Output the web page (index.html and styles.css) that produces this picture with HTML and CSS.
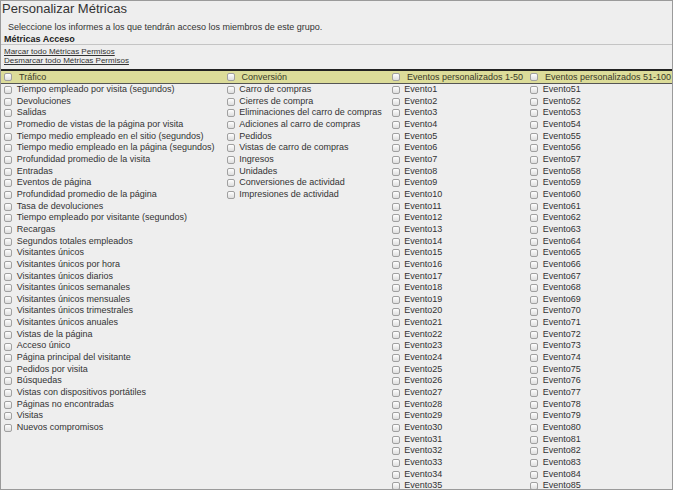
FILE: index.html
```html
<!DOCTYPE html>
<html lang="es">
<head>
<meta charset="utf-8">
<title>Personalizar Métricas</title>
<link rel="stylesheet" href="styles.css">
</head>
<body>
<div class="frame">
  <h1 class="title">Personalizar Métricas</h1>
  <p class="intro">Seleccione los informes a los que tendrán acceso los miembros de este grupo.</p>
  <div class="section-title">Métricas Acceso</div>
  <div class="links">
    <a href="#" class="link">Marcar todo Métricas Permisos</a>
    <a href="#" class="link">Desmarcar todo Métricas Permisos</a>
  </div>
  <div class="head">
    <label class="hcell"><input type="checkbox"><span>Tráfico</span></label>
    <label class="hcell"><input type="checkbox"><span>Conversión</span></label>
    <label class="hcell h3"><input type="checkbox"><span>Eventos personalizados 1-50</span></label>
    <label class="hcell"><input type="checkbox"><span>Eventos personalizados 51-100</span></label>
  </div>
  <div class="cols">
    <div class="col">
      <label class="item"><input type="checkbox"><span>Tiempo empleado por visita (segundos)</span></label>
      <label class="item"><input type="checkbox"><span>Devoluciones</span></label>
      <label class="item"><input type="checkbox"><span>Salidas</span></label>
      <label class="item"><input type="checkbox"><span>Promedio de vistas de la página por visita</span></label>
      <label class="item"><input type="checkbox"><span>Tiempo medio empleado en el sitio (segundos)</span></label>
      <label class="item"><input type="checkbox"><span>Tiempo medio empleado en la página (segundos)</span></label>
      <label class="item"><input type="checkbox"><span>Profundidad promedio de la visita</span></label>
      <label class="item"><input type="checkbox"><span>Entradas</span></label>
      <label class="item"><input type="checkbox"><span>Eventos de página</span></label>
      <label class="item"><input type="checkbox"><span>Profundidad promedio de la página</span></label>
      <label class="item"><input type="checkbox"><span>Tasa de devoluciones</span></label>
      <label class="item"><input type="checkbox"><span>Tiempo empleado por visitante (segundos)</span></label>
      <label class="item"><input type="checkbox"><span>Recargas</span></label>
      <label class="item"><input type="checkbox"><span>Segundos totales empleados</span></label>
      <label class="item"><input type="checkbox"><span>Visitantes únicos</span></label>
      <label class="item"><input type="checkbox"><span>Visitantes únicos por hora</span></label>
      <label class="item"><input type="checkbox"><span>Visitantes únicos diarios</span></label>
      <label class="item"><input type="checkbox"><span>Visitantes únicos semanales</span></label>
      <label class="item"><input type="checkbox"><span>Visitantes únicos mensuales</span></label>
      <label class="item"><input type="checkbox"><span>Visitantes únicos trimestrales</span></label>
      <label class="item"><input type="checkbox"><span>Visitantes únicos anuales</span></label>
      <label class="item"><input type="checkbox"><span>Vistas de la página</span></label>
      <label class="item"><input type="checkbox"><span>Acceso único</span></label>
      <label class="item"><input type="checkbox"><span>Página principal del visitante</span></label>
      <label class="item"><input type="checkbox"><span>Pedidos por visita</span></label>
      <label class="item"><input type="checkbox"><span>Búsquedas</span></label>
      <label class="item"><input type="checkbox"><span>Vistas con dispositivos portátiles</span></label>
      <label class="item"><input type="checkbox"><span>Páginas no encontradas</span></label>
      <label class="item"><input type="checkbox"><span>Visitas</span></label>
      <label class="item"><input type="checkbox"><span>Nuevos compromisos</span></label>
    </div>
    <div class="col">
      <label class="item"><input type="checkbox"><span>Carro de compras</span></label>
      <label class="item"><input type="checkbox"><span>Cierres de compra</span></label>
      <label class="item"><input type="checkbox"><span>Eliminaciones del carro de compras</span></label>
      <label class="item"><input type="checkbox"><span>Adiciones al carro de compras</span></label>
      <label class="item"><input type="checkbox"><span>Pedidos</span></label>
      <label class="item"><input type="checkbox"><span>Vistas de carro de compras</span></label>
      <label class="item"><input type="checkbox"><span>Ingresos</span></label>
      <label class="item"><input type="checkbox"><span>Unidades</span></label>
      <label class="item"><input type="checkbox"><span>Conversiones de actividad</span></label>
      <label class="item"><input type="checkbox"><span>Impresiones de actividad</span></label>
    </div>
    <div class="col">
      <label class="item"><input type="checkbox"><span>Evento1</span></label>
      <label class="item"><input type="checkbox"><span>Evento2</span></label>
      <label class="item"><input type="checkbox"><span>Evento3</span></label>
      <label class="item"><input type="checkbox"><span>Evento4</span></label>
      <label class="item"><input type="checkbox"><span>Evento5</span></label>
      <label class="item"><input type="checkbox"><span>Evento6</span></label>
      <label class="item"><input type="checkbox"><span>Evento7</span></label>
      <label class="item"><input type="checkbox"><span>Evento8</span></label>
      <label class="item"><input type="checkbox"><span>Evento9</span></label>
      <label class="item"><input type="checkbox"><span>Evento10</span></label>
      <label class="item"><input type="checkbox"><span>Evento11</span></label>
      <label class="item"><input type="checkbox"><span>Evento12</span></label>
      <label class="item"><input type="checkbox"><span>Evento13</span></label>
      <label class="item"><input type="checkbox"><span>Evento14</span></label>
      <label class="item"><input type="checkbox"><span>Evento15</span></label>
      <label class="item"><input type="checkbox"><span>Evento16</span></label>
      <label class="item"><input type="checkbox"><span>Evento17</span></label>
      <label class="item"><input type="checkbox"><span>Evento18</span></label>
      <label class="item"><input type="checkbox"><span>Evento19</span></label>
      <label class="item"><input type="checkbox"><span>Evento20</span></label>
      <label class="item"><input type="checkbox"><span>Evento21</span></label>
      <label class="item"><input type="checkbox"><span>Evento22</span></label>
      <label class="item"><input type="checkbox"><span>Evento23</span></label>
      <label class="item"><input type="checkbox"><span>Evento24</span></label>
      <label class="item"><input type="checkbox"><span>Evento25</span></label>
      <label class="item"><input type="checkbox"><span>Evento26</span></label>
      <label class="item"><input type="checkbox"><span>Evento27</span></label>
      <label class="item"><input type="checkbox"><span>Evento28</span></label>
      <label class="item"><input type="checkbox"><span>Evento29</span></label>
      <label class="item"><input type="checkbox"><span>Evento30</span></label>
      <label class="item"><input type="checkbox"><span>Evento31</span></label>
      <label class="item"><input type="checkbox"><span>Evento32</span></label>
      <label class="item"><input type="checkbox"><span>Evento33</span></label>
      <label class="item"><input type="checkbox"><span>Evento34</span></label>
      <label class="item"><input type="checkbox"><span>Evento35</span></label>
    </div>
    <div class="col">
      <label class="item"><input type="checkbox"><span>Evento51</span></label>
      <label class="item"><input type="checkbox"><span>Evento52</span></label>
      <label class="item"><input type="checkbox"><span>Evento53</span></label>
      <label class="item"><input type="checkbox"><span>Evento54</span></label>
      <label class="item"><input type="checkbox"><span>Evento55</span></label>
      <label class="item"><input type="checkbox"><span>Evento56</span></label>
      <label class="item"><input type="checkbox"><span>Evento57</span></label>
      <label class="item"><input type="checkbox"><span>Evento58</span></label>
      <label class="item"><input type="checkbox"><span>Evento59</span></label>
      <label class="item"><input type="checkbox"><span>Evento60</span></label>
      <label class="item"><input type="checkbox"><span>Evento61</span></label>
      <label class="item"><input type="checkbox"><span>Evento62</span></label>
      <label class="item"><input type="checkbox"><span>Evento63</span></label>
      <label class="item"><input type="checkbox"><span>Evento64</span></label>
      <label class="item"><input type="checkbox"><span>Evento65</span></label>
      <label class="item"><input type="checkbox"><span>Evento66</span></label>
      <label class="item"><input type="checkbox"><span>Evento67</span></label>
      <label class="item"><input type="checkbox"><span>Evento68</span></label>
      <label class="item"><input type="checkbox"><span>Evento69</span></label>
      <label class="item"><input type="checkbox"><span>Evento70</span></label>
      <label class="item"><input type="checkbox"><span>Evento71</span></label>
      <label class="item"><input type="checkbox"><span>Evento72</span></label>
      <label class="item"><input type="checkbox"><span>Evento73</span></label>
      <label class="item"><input type="checkbox"><span>Evento74</span></label>
      <label class="item"><input type="checkbox"><span>Evento75</span></label>
      <label class="item"><input type="checkbox"><span>Evento76</span></label>
      <label class="item"><input type="checkbox"><span>Evento77</span></label>
      <label class="item"><input type="checkbox"><span>Evento78</span></label>
      <label class="item"><input type="checkbox"><span>Evento79</span></label>
      <label class="item"><input type="checkbox"><span>Evento80</span></label>
      <label class="item"><input type="checkbox"><span>Evento81</span></label>
      <label class="item"><input type="checkbox"><span>Evento82</span></label>
      <label class="item"><input type="checkbox"><span>Evento83</span></label>
      <label class="item"><input type="checkbox"><span>Evento84</span></label>
      <label class="item"><input type="checkbox"><span>Evento85</span></label>
    </div>
  </div>
</div>
</body>
</html>
```
FILE: styles.css
```css
html, body {
  margin: 0;
  padding: 0;
  background: #ffffff;
}

body {
  font-family: "Liberation Sans", Arial, sans-serif;
  color: #333333;
}

.frame {
  box-sizing: border-box;
  width: 673px;
  height: 490px;
  border: 1px solid #9a9a9a;
  background: #eeeeee;
  overflow: hidden;
}

.title {
  margin: 0;
  padding-left: 1px;
  font-size: 13px;
  font-weight: normal;
  line-height: 15px;
  color: #333333;
}

.intro {
  margin: 5px 0 0;
  padding-left: 7px;
  font-size: 9px;
  line-height: 12px;
  color: #333333;
}

.section-title {
  margin-top: 2px;
  padding-left: 3px;
  font-size: 9px;
  font-weight: bold;
  line-height: 9px;
  height: 9px;
  border-bottom: 1px solid #c4c4c4;
  color: #222222;
}

.links {
  margin-top: 3px;
  padding-left: 3px;
  display: flex;
  flex-direction: column;
  align-items: flex-start;
}

.link {
  font-size: 8px;
  line-height: 8.5px;
  color: #333333;
  text-decoration: underline;
}

.head,
.cols {
  display: grid;
  grid-template-columns: 222.5px 165px 138.5px 1fr;
  padding-left: 3px;
}

.head {
  margin-top: 4px;
  height: 12px;
  background: #dcdc99;
  border-top: 2px solid #222222;
  border-bottom: 1px solid #555555;
}

.hcell {
  display: flex;
  align-items: center;
  gap: 7px;
  height: 12px;
  font-size: 9px;
  line-height: 12px;
  white-space: nowrap;
  overflow: hidden;
  color: #3a3a2a;
}

.hcell.h3 {
  gap: 7.5px;
}

.col {
  display: flex;
  flex-direction: column;
}

.item {
  display: flex;
  align-items: center;
  gap: 4.7px;
  height: 11.67px;
  font-size: 9px;
  line-height: 11.67px;
  white-space: nowrap;
  color: #333333;
}

input[type="checkbox"] {
  appearance: none;
  -webkit-appearance: none;
  flex: none;
  box-sizing: border-box;
  width: 8px;
  height: 8px;
  margin: 0.5px 0 0;
  border: 1px solid #a0a0a0;
  border-radius: 2px;
  background: linear-gradient(#fefefe, #dedede);
}
```
